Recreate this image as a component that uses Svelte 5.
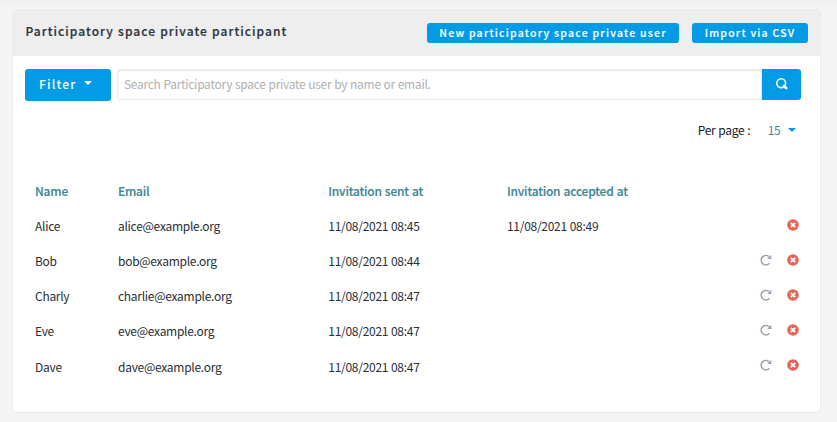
<script>
  const people = [
    { name: 'Alice', email: 'alice@example.org', sent: '11/08/2021 08:45', accepted: '11/08/2021 08:49' },
    { name: 'Bob', email: 'bob@example.org', sent: '11/08/2021 08:44' },
    { name: 'Charly', email: 'charlie@example.org', sent: '11/08/2021 08:47' },
    { name: 'Eve', email: 'eve@example.org', sent: '11/08/2021 08:47' },
    { name: 'Dave', email: 'dave@example.org', sent: '11/08/2021 08:47' }
  ];
</script>

<main>
  <section class="card">
    <header>
      <h2>Participatory space private participant</h2>
      <button class="small">New participatory space private user</button>
      <button class="small csv">Import via CSV</button>
    </header>
    <div class="tools">
      <button class="filter">Filter <i class="caret"></i></button>
      <form>
        <input type="text" placeholder="Search Participatory space private user by name or email." />
        <button class="search" type="button" aria-label="Search">
          <svg width="12" height="12" viewBox="0 0 12 12" fill="none" stroke="#fff">
            <circle cx="5.2" cy="5.2" r="4.4" stroke-width="1.6" />
            <path d="M8 8 10.2 10.2" stroke-width="2.6" stroke-linecap="round" />
          </svg>
        </button>
      </form>
    </div>
    <div class="paging"><span>Per page :</span><span class="count">15</span><i class="caret blue"></i></div>
    <div class="table">
      <div class="row head">
        <span>Name</span><span>Email</span><span>Invitation sent at</span><span>Invitation accepted at</span><span></span>
      </div>
      {#each people as p}
        <div class="row">
          <span>{p.name}</span><span>{p.email}</span><span>{p.sent}</span><span>{p.accepted ?? ''}</span>
          <span class="actions">
            {#if !p.accepted}
              <svg width="12" height="12" viewBox="0 0 12 12" fill="none">
                <path d="M9.4 9.3A4.7 4.7 0 1 1 8.9 2.6" stroke="#96a3b3" stroke-width="1.6" />
                <path d="M11.3.8V5H7.1Z" fill="#96a3b3" />
              </svg>
            {/if}
            <svg width="12" height="12" viewBox="0 0 12 12">
              <circle cx="6" cy="6" r="5.8" fill="#e66456" />
              <path d="M3.8 3.8 8.2 8.2M8.2 3.8 3.8 8.2" stroke="#fff" stroke-width="1.9" />
            </svg>
          </span>
        </div>
      {/each}
    </div>
  </section>
</main>

<style>
  :global(body) { margin: 0; background: #f5f5f5; }
  * { box-sizing: border-box; }
  main {
    height: 422px;
    padding: 9px 16px 0 12px;
    background: linear-gradient(#efefef, #f5f5f5 6px);
    font: 12px/20px "Noto Sans CJK SC", "Noto Sans", sans-serif;
    letter-spacing: -.28px;
    word-spacing: .4px;
    color: #1a181d;
    overflow: hidden;
  }
  .card {
    height: 404px;
    background: #fff;
    border: 1px solid #ebebeb;
    border-radius: 4px;
    overflow: hidden;
  }
  header {
    display: flex;
    align-items: center;
    height: 46px;
    padding: 0 12px 0 12.5px;
    background: #eee;
  }
  h2 {
    flex: 1;
    margin: 0;
    padding-bottom: 4px;
    font-size: 12px;
    line-height: 20px;
    font-weight: 500;
    letter-spacing: 1.06px;
    color: #2c3540;
    -webkit-text-stroke: .2px;
    white-space: nowrap;
  }
  button {
    border: 0;
    padding: 0;
    border-radius: 3px;
    background: #039be5;
    color: #fff;
    font-family: inherit;
    font-weight: 500;
    white-space: nowrap;
  }
  .small {
    width: 252px;
    height: 20px;
    font-size: 10.5px;
    line-height: 20px;
    letter-spacing: 1.24px;
    -webkit-text-stroke: .15px;
  }
  .csv { width: 116px; margin-left: 13px; }
  .tools { display: flex; gap: 6px; padding: 13px 19px 0 12px; }
  .filter {
    display: flex;
    align-items: center;
    width: 86px;
    height: 32px;
    padding: 0 0 2px 14px;
    font-size: 12.2px;
    letter-spacing: 1.15px;
  }
  .caret {
    width: 0;
    height: 0;
    margin: -2px 0 0 8px;
    border: 4px solid transparent;
    border-top-color: #fff;
    border-bottom: 0;
  }
  form { display: flex; flex: 1; height: 31px; }
  input {
    flex: 1;
    min-width: 0;
    padding: 0 6px 2px;
    border: 1px solid #e8e8e8;
    border-radius: 3px 0 0 3px;
    box-shadow: inset 0 1px 2px rgba(10, 10, 10, .1);
    font: inherit;
    letter-spacing: inherit;
    word-spacing: inherit;
    color: #1a181d;
  }
  input::placeholder { color: #b0b0b0; opacity: 1; }
  .search {
    display: flex;
    align-items: center;
    justify-content: center;
    width: 39px;
    padding-bottom: 1px;
    border-radius: 0 3px 3px 0;
  }
  .paging {
    display: flex;
    align-items: center;
    justify-content: flex-end;
    height: 20px;
    margin-top: 19px;
    padding-right: 24px;
  }
  .count { margin-left: 17.5px; color: #3f8793; }
  .blue { margin: 0 0 0 7.5px; border-top-color: #039be5; }
  .table { margin-top: 33px; padding: 0 21.5px 0 22px; }
  .row {
    display: grid;
    grid-template-columns: 83px 210.3px 178.7px 1fr 60px;
    align-items: center;
    height: 35px;
    color: #2a2e36;
    white-space: nowrap;
  }
  .row:last-child { margin-top: 1px; }
  .row:last-child .actions { padding-bottom: 3px; }
  .head { font-weight: 500; letter-spacing: -.2px; word-spacing: .6px; color: #3d8692; -webkit-text-stroke: .15px; }
  .actions { display: flex; justify-content: flex-end; gap: 15px; padding-bottom: 1px; }
</style>
